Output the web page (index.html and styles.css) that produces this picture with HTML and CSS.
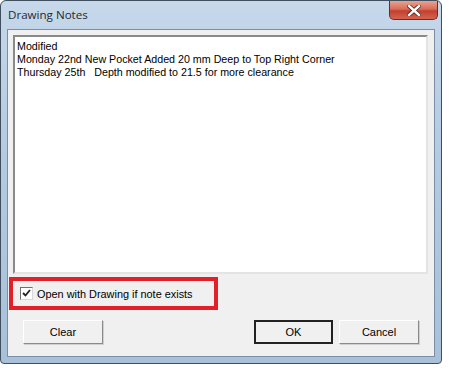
FILE: index.html
```html
<!DOCTYPE html>
<html lang="en">
<head>
  <meta charset="UTF-8">
  <title>Drawing Notes</title>
  <link rel="stylesheet" href="styles.css">
</head>
<body>
<div class="window">
  <div class="titlebar">
    <span class="title">Drawing Notes</span>
    <button class="close-btn">
      <svg width="14" height="11" viewBox="0 0 14 11">
        <path d="M2 1 L12 10 M12 1 L2 10" stroke="#4a2a24" stroke-width="4" stroke-linecap="square"/>
        <path d="M2 1 L12 10 M12 1 L2 10" stroke="#fff" stroke-width="2.4" stroke-linecap="square"/>
      </svg>
    </button>
  </div>
  <div class="client">
    <textarea class="notes" readonly>Modified
Monday 22nd New Pocket Added 20 mm Deep to Top Right Corner
Thursday 25th   Depth modified to 21.5 for more clearance</textarea>

    <div class="highlight">
      <label class="check-row">
        <span class="checkbox">
          <svg width="11" height="11" viewBox="0 0 11 11">
            <path d="M2 5 L4.5 7.5 L9 2" fill="none" stroke="#222" stroke-width="1.8"/>
          </svg>
        </span>
        <span class="check-label">Open with Drawing if note exists</span>
      </label>
    </div>

    <div class="button-row">
      <button class="btn">Clear</button>
      <div class="right-buttons">
        <button class="btn default">OK</button>
        <button class="btn">Cancel</button>
      </div>
    </div>
  </div>
</div>
</body>
</html>
```

FILE: styles.css
```css
body {
  margin: 0;
  background: #fff;
  font-family: "Liberation Sans", Arial, sans-serif;
}
.window {
  width: 442px;
  height: 364px;
  box-sizing: border-box;
  border: 1px solid #404e5e;
  border-radius: 6px 6px 4px 4px;
  background: linear-gradient(to bottom, #c6d8ea 0%, #b4cbe2 40%, #a8c0d9 100%);
  display: flex;
  flex-direction: column;
}
.titlebar {
  height: 28px;
  display: flex;
  justify-content: space-between;
  align-items: flex-start;
  padding-left: 7px;
  padding-right: 3px;
}
.title {
  font-family: "Open Sans", sans-serif;
  font-size: 11.6px;
  color: #1e2a38;
  margin-top: 6px;
}
.close-btn {
  width: 49px;
  height: 19px;
  padding: 0;
  border: 1px solid #6e2a22;
  border-top: none;
  border-radius: 0 0 5px 5px;
  background: linear-gradient(to bottom, #e7a391 0%, #d96c58 45%, #c2402e 55%, #d4634e 100%);
  display: flex;
  align-items: center;
  justify-content: center;
}
.client {
  flex: 1;
  margin: 0 6px 6px 6px;
  background: #f0f0f0;
  border: 1px solid #7b8ea3;
  padding: 5px;
  display: flex;
  flex-direction: column;
}
.notes {
  width: 415px;
  height: 239px;
  box-sizing: border-box;
  margin: 0;
  padding: 3px 2px 0;
  resize: none;
  overflow: hidden;
  font-family: "Liberation Sans", Arial, sans-serif;
  font-size: 10.7px;
  line-height: 13px;
  color: #000;
  white-space: pre-wrap;
  background: #fff;
  border: 2px solid;
  border-color: #8a8a8a #e4e4e4 #e4e4e4 #8a8a8a;
  outline: none;
}
.highlight {
  width: 209px;
  height: 33px;
  box-sizing: border-box;
  margin: 3px 0 0 -4px;
  border: 4px solid #e3202a;
  padding-left: 7px;
  display: flex;
  align-items: center;
}
.check-row {
  display: flex;
  align-items: center;
  gap: 4px;
  color: #000;
}
.check-label {
  font-size: 10.9px;
}
.checkbox {
  width: 13px;
  height: 13px;
  box-sizing: border-box;
  border: 1px solid;
  border-color: #707070 #d8d8d8 #d8d8d8 #707070;
  background: #fff;
  display: flex;
  align-items: center;
  justify-content: center;
}
.button-row {
  margin-top: 10px;
  padding: 0 10px;
  display: flex;
  justify-content: space-between;
}
.right-buttons {
  display: flex;
  gap: 6px;
}
.btn {
  width: 80px;
  height: 24px;
  box-sizing: border-box;
  padding: 0;
  font-family: "Liberation Sans", Arial, sans-serif;
  font-size: 11px;
  color: #000;
  background: #f0f0f0;
  border: 1px solid;
  border-color: #fff #8a8a8a #8a8a8a #fff;
  box-shadow: 1px 1px 0 #d0d0d0;
}
.btn.default {
  width: 79px;
  border: 2px solid #222;
  box-shadow: none;
}
```
